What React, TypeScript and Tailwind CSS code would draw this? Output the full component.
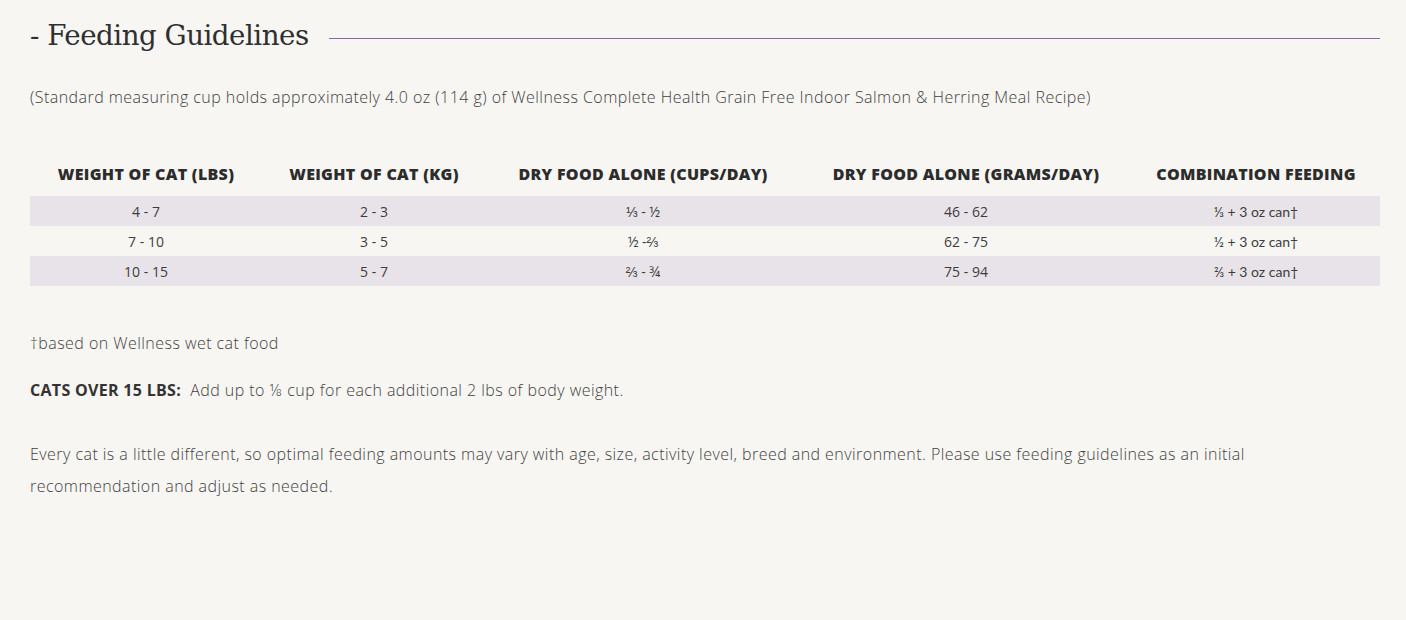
const rows = [
  { lbs: "4 - 7", kg: "2 - 3", cups: "⅓ - ½", grams: "46 - 62", combo: "⅓ + 3 oz can†", striped: true },
  { lbs: "7 - 10", kg: "3 - 5", cups: "½ -⅔", grams: "62 - 75", combo: "½ + 3 oz can†", striped: false },
  { lbs: "10 - 15", kg: "5 - 7", cups: "⅔ - ¾", grams: "75 - 94", combo: "⅔ + 3 oz can†", striped: true },
]

const headers = [
  "Weight of Cat (lbs)",
  "Weight of Cat (kg)",
  "Dry Food Alone (cups/day)",
  "Dry Food Alone (grams/day)",
  "Combination Feeding",
]

const body = { fontFamily: "'Open Sans', sans-serif" }

export default function App() {
  return (
    <div className="min-h-[620px] w-full bg-[#f7f6f3] pl-[30px] pr-[26px] pt-[18px] text-[#3a3a3a]" style={body}>
      <div className="flex items-center gap-5">
        <h2
          className="text-[27.7px] leading-[36px] text-[#2f2f2f]"
          style={{ fontFamily: "'DejaVu Serif', 'Liberation Serif', serif", letterSpacing: "-0.5px" }}
        >
          - Feeding Guidelines
        </h2>
        <div className="mt-[4px] h-px flex-1 bg-[#8a68a8]" />
      </div>

      <p className="mt-[31px] text-[16px] font-light leading-6 tracking-[0.45px] text-[#3f3f3f]">
        (Standard measuring cup holds approximately 4.0 oz (114 g) of Wellness Complete Health Grain Free Indoor Salmon &amp; Herring Meal Recipe)
      </p>

      <table className="mt-[45px] w-full table-fixed border-collapse">
        <colgroup>
          <col className="w-[232px]" />
          <col className="w-[224px]" />
          <col className="w-[314px]" />
          <col className="w-[332px]" />
          <col className="w-[248px]" />
        </colgroup>
        <thead>
          <tr className="h-[42px]">
            {headers.map((h) => (
              <th
                key={h}
                className="pb-[2px] text-center text-[16px] font-extrabold uppercase tracking-[0.3px] text-[#2c2c2c]"
              >
                {h}
              </th>
            ))}
          </tr>
        </thead>
        <tbody>
          {rows.map((r) => (
            <tr key={r.lbs} className={r.striped ? "h-[30px] bg-[#e8e3e8]" : "h-[30px]"}>
              <td className="text-center text-[14px] text-[#3d3d3d]">{r.lbs}</td>
              <td className="text-center text-[14px] text-[#3d3d3d]">{r.kg}</td>
              <td className="text-center text-[14px] text-[#3d3d3d]">{r.cups}</td>
              <td className="text-center text-[14px] text-[#3d3d3d]">{r.grams}</td>
              <td className="text-center text-[14px] text-[#3d3d3d]" style={{ fontFamily: "Lato, sans-serif" }}>
                {r.combo}
              </td>
            </tr>
          ))}
        </tbody>
      </table>

      <p className="mt-[45px] text-[16px] font-light leading-6 tracking-[0.45px] text-[#3f3f3f]">
        †based on Wellness wet cat food
      </p>

      <p className="mt-[23px] text-[16px] font-light leading-6 tracking-[0.45px] text-[#3f3f3f]">
        <span className="font-bold tracking-[0.3px] text-[#333]">CATS OVER 15 LBS:</span>&nbsp; Add up to ⅛ cup for each additional 2 lbs of body weight.
      </p>

      <p className="mt-[36px] max-w-[1260px] text-[16px] font-light leading-8 tracking-[0.45px] text-[#3f3f3f]">
        Every cat is a little different, so optimal feeding amounts may vary with age, size, activity level, breed and environment. Please use feeding guidelines as an initial recommendation and adjust as needed.
      </p>
    </div>
  )
}
